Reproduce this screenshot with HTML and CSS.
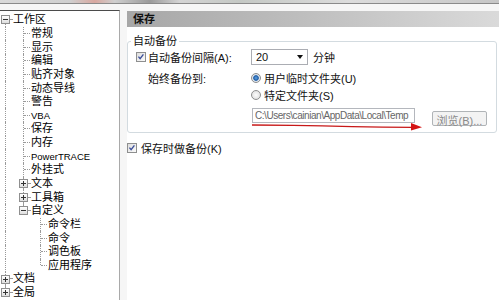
FILE: index.html
```html
<!DOCTYPE html>
<html lang="zh-CN">
<head>
    <meta charset="UTF-8">
    <title>选项 - 保存</title>
    <link rel="stylesheet" href="styles.css">
</head>
<body>
    <div class="chrome"></div>

    <div class="main">
        <!-- left: options tree -->
        <div class="tree">
            <div class="row">
                <span class="cell w12"><i class="knob"><i class="stem off"></i><b class="box minus"></b><i class="stem"></i></i><i class="arm"></i></span>
                <span class="label">工作区</span>
            </div>
            <div class="row"><span class="cell w18"><i class="pad"></i><i class="stem"></i></span><span class="cell w12"><i class="pad"></i><i class="stem"></i><i class="arm"></i></span><span class="label">常规</span></div>
            <div class="row"><span class="cell w18"><i class="pad"></i><i class="stem"></i></span><span class="cell w12"><i class="pad"></i><i class="stem"></i><i class="arm"></i></span><span class="label">显示</span></div>
            <div class="row"><span class="cell w18"><i class="pad"></i><i class="stem"></i></span><span class="cell w12"><i class="pad"></i><i class="stem"></i><i class="arm"></i></span><span class="label">编辑</span></div>
            <div class="row"><span class="cell w18"><i class="pad"></i><i class="stem"></i></span><span class="cell w12"><i class="pad"></i><i class="stem"></i><i class="arm"></i></span><span class="label">贴齐对象</span></div>
            <div class="row"><span class="cell w18"><i class="pad"></i><i class="stem"></i></span><span class="cell w12"><i class="pad"></i><i class="stem"></i><i class="arm"></i></span><span class="label">动态导线</span></div>
            <div class="row"><span class="cell w18"><i class="pad"></i><i class="stem"></i></span><span class="cell w12"><i class="pad"></i><i class="stem"></i><i class="arm"></i></span><span class="label">警告</span></div>
            <div class="row"><span class="cell w18"><i class="pad"></i><i class="stem"></i></span><span class="cell w12"><i class="pad"></i><i class="stem"></i><i class="arm"></i></span><span class="label latin">VBA</span></div>
            <div class="row"><span class="cell w18"><i class="pad"></i><i class="stem"></i></span><span class="cell w12"><i class="pad"></i><i class="stem"></i><i class="arm"></i></span><span class="label">保存</span></div>
            <div class="row"><span class="cell w18"><i class="pad"></i><i class="stem"></i></span><span class="cell w12"><i class="pad"></i><i class="stem"></i><i class="arm"></i></span><span class="label">内存</span></div>
            <div class="row"><span class="cell w18"><i class="pad"></i><i class="stem"></i></span><span class="cell w12"><i class="pad"></i><i class="stem"></i><i class="arm"></i></span><span class="label latin">PowerTRACE</span></div>
            <div class="row"><span class="cell w18"><i class="pad"></i><i class="stem"></i></span><span class="cell w12"><i class="pad"></i><i class="stem"></i><i class="arm"></i></span><span class="label">外挂式</span></div>
            <div class="row">
                <span class="cell w18"><i class="pad"></i><i class="stem"></i></span>
                <span class="cell w12"><i class="knob"><i class="stem"></i><b class="box plus"></b><i class="stem"></i></i><i class="arm"></i></span>
                <span class="label">文本</span>
            </div>
            <div class="row">
                <span class="cell w18"><i class="pad"></i><i class="stem"></i></span>
                <span class="cell w12"><i class="knob"><i class="stem"></i><b class="box plus"></b><i class="stem"></i></i><i class="arm"></i></span>
                <span class="label">工具箱</span>
            </div>
            <div class="row">
                <span class="cell w18"><i class="pad"></i><i class="stem"></i></span>
                <span class="cell w12"><i class="knob"><i class="stem"></i><b class="box minus"></b><i class="stem off"></i></i><i class="arm"></i></span>
                <span class="label">自定义</span>
            </div>
            <div class="row"><span class="cell w18"><i class="pad"></i><i class="stem"></i></span><span class="cell w17"></span><span class="cell w12"><i class="pad"></i><i class="stem"></i><i class="arm"></i></span><span class="label">命令栏</span></div>
            <div class="row"><span class="cell w18"><i class="pad"></i><i class="stem"></i></span><span class="cell w17"></span><span class="cell w12"><i class="pad"></i><i class="stem"></i><i class="arm"></i></span><span class="label">命令</span></div>
            <div class="row"><span class="cell w18"><i class="pad"></i><i class="stem"></i></span><span class="cell w17"></span><span class="cell w12"><i class="pad"></i><i class="stem"></i><i class="arm"></i></span><span class="label">调色板</span></div>
            <div class="row"><span class="cell w18"><i class="pad"></i><i class="stem"></i></span><span class="cell w17"></span><span class="cell w12"><i class="pad"></i><i class="stem half"></i><i class="arm"></i></span><span class="label">应用程序</span></div>
            <div class="row">
                <span class="cell w12"><i class="knob"><i class="stem"></i><b class="box plus"></b><i class="stem"></i></i><i class="arm"></i></span>
                <span class="label">文档</span>
            </div>
            <div class="row">
                <span class="cell w12"><i class="knob"><i class="stem"></i><b class="box plus"></b><i class="stem off"></i></i><i class="arm"></i></span>
                <span class="label">全局</span>
            </div>
        </div>

        <!-- right: page content -->
        <div class="panel">
            <div class="head">保存</div>

            <fieldset class="group">
                <legend>自动备份</legend>
                <div class="opts">
                    <label class="opt">
                        <span class="check"><svg viewBox="0 0 10 10"><path d="M1.8 4.6L3.9 7.2L8 1.8"/></svg></span>自动备份间隔(A):
                    </label>
                    <div class="opt">
                        <span class="combo">20<i class="caret"></i></span>
                        <span class="unit">分钟</span>
                    </div>

                    <div class="opt indent">始终备份到:</div>
                    <label class="opt"><span class="radio on"></span>用户临时文件夹(U)</label>

                    <div></div>
                    <label class="opt"><span class="radio"></span>特定文件夹(S)</label>

                    <div></div>
                    <div class="pathrow">
                        <input class="path" type="text" value="C:\Users\cainian\AppData\Local\Temp" disabled>
                        <button class="browse" disabled>浏览(B)...</button>
                        <svg class="mark" width="176" height="12" viewBox="0 0 176 12">
                            <path d="M1 5 L42 5.3 Q100 6.6 162 7.4" fill="none" stroke="#c81818" stroke-width="1.3"/>
                            <polygon points="160,3 171,7.2 160,10.5" fill="#d41414"/>
                        </svg>
                    </div>
                </div>
            </fieldset>

            <label class="opt keep">
                <span class="check"><svg viewBox="0 0 10 10"><path d="M1.8 4.6L3.9 7.2L8 1.8"/></svg></span>保存时做备份(K)
            </label>
        </div>
    </div>
</body>
</html>
```

FILE: styles.css
```css
/* page base */
body {
    margin: 0;
    width: 499px;
    height: 300px;
    overflow: hidden;
    background: #f6f6f6;
    font-family: "Liberation Sans", "Noto Sans CJK SC", sans-serif;
    font-size: 11px;
    color: #111;
}

/* blurred strip of the window above */
.chrome {
    height: 3px;
    border-bottom: 1px solid #8a8a8a;
    background: linear-gradient(to right, #d9d9d9 0, #cfcfcf 14%, #d8a8a0 19%, #cfcfcf 23%, #9a9a9a 30%, #d4d4d4 36%, #c4c8c4 48%, #dcdcdc 70%, #c6c6c6 100%);
}

.main {
    display: flex;
    height: 296px;
}

/* ---------- tree ---------- */
.tree {
    box-sizing: border-box;
    width: 120px;
    margin-top: 6px;
    padding-top: 2px;
    border-top: 1px solid #4b4b4b;
    border-right: 1px solid #a9a9a9;
    background: #fff;
}

.row {
    display: flex;
    height: 13.65px;
    white-space: nowrap;
}

.cell {
    display: flex;
    flex: none;
}

.w12 { width: 12px; }
.w17 { width: 17px; }
.w18 { width: 18px; }

.pad {
    width: 5px;
    flex: none;
}

.stem {
    flex: none;
    width: 0;
    border-left: 1px dotted #9a9a9a;
}

.stem.half {
    align-self: flex-start;
    height: 50%;
}

.stem.off {
    border-color: transparent;
}

.arm {
    flex: 1;
    align-self: center;
    height: 0;
    border-top: 1px dotted #9a9a9a;
}

.knob {
    display: flex;
    flex-direction: column;
    align-items: center;
    width: 9px;
    margin-left: 1px;
}

.knob .stem {
    flex: 1;
}

.box {
    box-sizing: border-box;
    flex: none;
    width: 9px;
    height: 9px;
    border: 1px solid #8f8f8f;
    background: linear-gradient(#333, #333) center / 5px 1px no-repeat,
                linear-gradient(#fff, #dedede);
}

.box.plus {
    background: linear-gradient(#333, #333) center / 5px 1px no-repeat,
                linear-gradient(#333, #333) center / 1px 5px no-repeat,
                linear-gradient(#fff, #dedede);
}

.label {
    align-self: center;
    margin-left: 1px;
    line-height: 13px;
    color: #000;
}

.label.latin {
    font-size: 9.5px;
}

/* ---------- right panel ---------- */
.panel {
    flex: 1;
    margin-left: 7px;
    margin-top: 7px;
    background: #fff;
}

.head {
    height: 16px;
    padding-left: 6px;
    line-height: 16px;
    font-weight: bold;
    color: #111;
    background: linear-gradient(to right, #a7a7a7, #bdbdbd 45%, #dadada);
}

.group {
    margin: 7px 2px 0 0;
    padding: 1px 0 6px 8px;
    min-width: 0;
    border: 1px solid #d3dbe0;
    border-radius: 3px;
}

.group legend {
    margin-left: -5px;
    padding: 0 2px;
    line-height: 14px;
}

.opts {
    display: grid;
    grid-template-columns: 115px 1fr;
    grid-template-rows: 16px 21px 17px auto;
}

.opt {
    display: flex;
    align-items: center;
    align-self: end;
    height: 17px;
    white-space: nowrap;
}

.opts > .opt:first-child,
.opts > .opt:nth-child(2) {
    height: 16px;
}

.indent {
    padding-left: 12px;
}

.check {
    box-sizing: border-box;
    display: inline-flex;
    flex: none;
    width: 10px;
    height: 10px;
    margin-right: 2px;
    border: 1px solid #8e8f8f;
    background: linear-gradient(135deg, #dedede, #fbfbfb);
}

.check svg {
    width: 8px;
    height: 8px;
}

.check path {
    fill: none;
    stroke: #3c4f9a;
    stroke-width: 1.7;
}

.radio {
    box-sizing: border-box;
    flex: none;
    width: 10px;
    height: 10px;
    margin-right: 3px;
    border: 1px solid #8e8f8f;
    border-radius: 50%;
    background: radial-gradient(circle, #fdfdfd, #d9d9d9);
}

.radio.on {
    background: radial-gradient(circle, #5fa3e2 0, #1e5ca6 2.4px, #e4ebf2 3.2px, #cfcfcf 100%);
}

.combo {
    box-sizing: border-box;
    display: flex;
    align-items: center;
    width: 57px;
    height: 16px;
    padding-left: 4px;
    border: 1px solid #abadb3;
    background: #fff;
}

.caret {
    margin-left: auto;
    margin-right: 4px;
    border-left: 3px solid transparent;
    border-right: 3px solid transparent;
    border-top: 4px solid #111;
}

.unit {
    margin-left: 5px;
}

.pathrow {
    position: relative;
    display: flex;
    align-items: flex-start;
    margin-top: 5px;
}

.path {
    box-sizing: border-box;
    width: 163px;
    height: 15px;
    margin: 0 0 0 1px;
    padding: 0 0 0 2px;
    border: 1px solid #b4b7bd;
    background: #fff;
    color: #666;
    font: 10px "Liberation Sans", sans-serif;
    letter-spacing: -0.45px;
}

.browse {
    box-sizing: border-box;
    width: 55px;
    height: 15px;
    margin: 3px 0 0 17px;
    padding: 0;
    border: 1px solid #b0b4b7;
    border-radius: 2px;
    background: #f3f3f3;
    color: #8a8a8a;
    font: 11px "Liberation Sans", "Noto Sans CJK SC", sans-serif;
}

/* red hand-drawn arrow on top of the screenshot */
.mark {
    position: absolute;
    left: 0;
    top: 12px;
}

.keep {
    margin-top: 10px;
    height: 10px;
}

.keep .check {
    margin-right: 4px;
}
```
